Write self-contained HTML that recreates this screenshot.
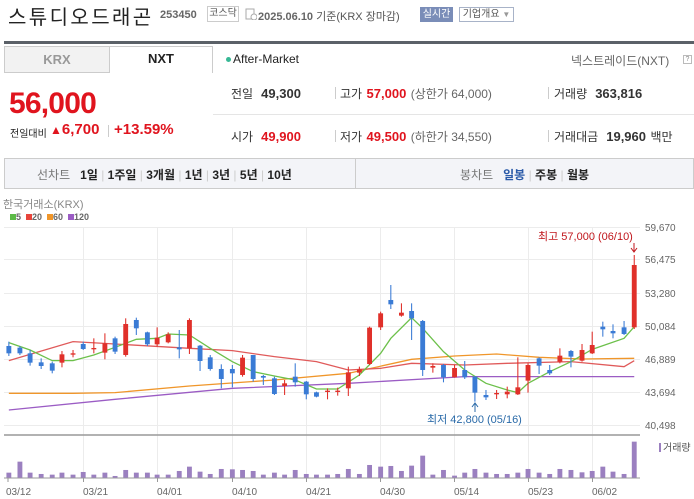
<!DOCTYPE html>
<html><head><meta charset="utf-8">
<style>
*{margin:0;padding:0;box-sizing:border-box}
body{width:694px;height:499px;overflow:hidden;background:#fff;font-family:"Liberation Sans","Noto Sans CJK KR",sans-serif;color:#333;position:relative}
.a{position:absolute;white-space:nowrap}
.red{color:#e0141e}
.lbl{font-size:12px;color:#333}
.val{font-size:13px;font-weight:bold}
.sm{font-size:12px;color:#666}
.div{position:absolute;width:1px;height:12px;background:#ccc}
.pb{font-size:12px;color:#222;font-weight:bold}
</style></head><body>
<div class="a" style="left:8px;top:1px;font-size:20px;color:#222;letter-spacing:2.4px">스튜디오드래곤</div>
<div class="a" style="left:160px;top:9px;font-size:11px;font-weight:bold;color:#666">253450</div>
<div class="a" style="left:207px;top:6px;width:32px;height:16px;border:1px solid #ccc;font-size:10px;line-height:14px;text-align:center;color:#555">코스닥</div>
<svg class="a" style="left:245px;top:8px" width="12" height="12"><rect x="1" y="1" width="8" height="10" fill="none" stroke="#aaa"/><circle cx="9" cy="9" r="3" fill="#fff" stroke="#aaa"/></svg>
<div class="a" style="left:258px;top:8px;font-size:11px;color:#555"><b style="color:#666">2025.06.10</b> 기준(KRX 장마감)</div>
<div class="a" style="left:420px;top:7px;width:33px;height:15px;background:#7a8db8;color:#fff;font-size:10px;line-height:15px;text-align:center">실시간</div>
<div class="a" style="left:459px;top:7px;width:55px;height:15px;border:1px solid #a8b3c8;color:#555;font-size:10px;line-height:13px;text-align:center">기업개요 <span style="color:#999;font-size:8px">▼</span></div>
<div class="a" style="left:4px;top:41px;width:690px;height:3px;background:#5b6168"></div>
<div class="a" style="left:4px;top:46px;width:105px;height:27px;background:#f2f2f2;border:1px solid #ccc;border-right:none;font-size:13px;font-weight:bold;color:#999;text-align:center;line-height:25px">KRX</div>
<div class="a" style="left:109px;top:46px;width:104px;height:27px;border:1px solid #ccc;border-bottom:none;font-size:13px;font-weight:bold;color:#222;text-align:center;line-height:23px">NXT</div>
<div class="a" style="left:226px;top:57px;width:5px;height:5px;border-radius:50%;background:#37b895"></div>
<div class="a" style="left:233px;top:52px;font-size:12px;color:#222">After-Market</div>
<div class="a" style="left:571px;top:52px;font-size:12px;color:#666">넥스트레이드(NXT)</div>
<div class="a" style="left:683px;top:55px;width:9px;height:9px;border:1px solid #bbb;font-size:7px;line-height:7px;text-align:center;color:#888">?</div>
<div class="a red" style="left:9px;top:87px;font-size:30px;font-weight:bold;letter-spacing:-0.8px">56,000</div>
<div class="a" style="left:10px;top:125px;font-size:10px;color:#222">전일대비</div>
<div class="a red" style="left:50px;top:121px;font-size:15px;font-weight:bold"><span style="font-size:12px">▲</span>6,700</div>
<div class="div" style="left:108px;top:125px"></div>
<div class="a red" style="left:114px;top:121px;font-size:15px;font-weight:bold">+13.59%</div>
<div class="a" style="left:213px;top:114px;width:481px;height:1px;background:#e5e5e5"></div>
<div class="a" style="left:231px;top:85px"><span class="lbl">전일</span> <span class="val">&nbsp;49,300</span></div>
<div class="div" style="left:335px;top:87px"></div>
<div class="a" style="left:340px;top:85px"><span class="lbl">고가</span> <span class="val red">57,000</span> <span class="sm">(상한가 64,000)</span></div>
<div class="div" style="left:548px;top:87px"></div>
<div class="a" style="left:554px;top:85px"><span class="lbl">거래량</span> <span class="val">&nbsp;363,816</span></div>
<div class="a" style="left:231px;top:128px"><span class="lbl">시가</span> <span class="val red">&nbsp;49,900</span></div>
<div class="div" style="left:335px;top:130px"></div>
<div class="a" style="left:340px;top:128px"><span class="lbl">저가</span> <span class="val red">49,500</span> <span class="sm">(하한가 34,550)</span></div>
<div class="div" style="left:548px;top:130px"></div>
<div class="a" style="left:554px;top:128px"><span class="lbl">거래대금</span> <span class="val">&nbsp;19,960</span> <span class="lbl">백만</span></div>
<div class="a" style="left:4px;top:158px;width:690px;height:31px;background:#f3f4f8;border:1px solid #ccc"></div>
<div class="a" style="left:355px;top:159px;width:1px;height:29px;background:#ccc"></div>
<div class="a" style="left:37px;top:166px;font-size:12px"><span style="color:#777">선차트</span>&nbsp;&nbsp;&nbsp;<span class="pb">1일</span> <span style="color:#ccc">|</span> <span class="pb">1주일</span> <span style="color:#ccc">|</span> <span class="pb">3개월</span> <span style="color:#ccc">|</span> <span class="pb">1년</span> <span style="color:#ccc">|</span> <span class="pb">3년</span> <span style="color:#ccc">|</span> <span class="pb">5년</span> <span style="color:#ccc">|</span> <span class="pb">10년</span></div>
<div class="a" style="left:460px;top:166px;font-size:12px"><span style="color:#777">봉차트</span>&nbsp;&nbsp;&nbsp;<span class="pb" style="color:#2a5aa8">일봉</span> <span style="color:#ccc">|</span> <span class="pb">주봉</span> <span style="color:#ccc">|</span> <span class="pb">월봉</span></div>
<div class="a" style="left:3px;top:199px;font-size:11px;line-height:12px;color:#888">한국거래소(KRX)</div>
<div class="a" style="left:10px;top:212px;font-size:9px;line-height:10px;font-weight:bold;color:#666"><span style="display:inline-block;width:6px;height:6px;background:#5cba47"></span>5 &nbsp;<span style="display:inline-block;width:6px;height:6px;background:#e8453c"></span>20 &nbsp;<span style="display:inline-block;width:6px;height:6px;background:#f0962a"></span>60 &nbsp;<span style="display:inline-block;width:6px;height:6px;background:#9b5cc4"></span>120</div>

<svg class="a" style="left:0;top:0" width="694" height="499">
<g stroke="#ececec" stroke-width="1">
<line x1="4" y1="227.5" x2="640" y2="227.5"/><line x1="4" y1="259.5" x2="640" y2="259.5"/><line x1="4" y1="293.5" x2="640" y2="293.5"/><line x1="4" y1="326.5" x2="640" y2="326.5"/><line x1="4" y1="359.5" x2="640" y2="359.5"/><line x1="4" y1="392.5" x2="640" y2="392.5"/><line x1="4" y1="425.5" x2="640" y2="425.5"/>
<line x1="83.5" y1="227" x2="83.5" y2="478"/><line x1="157.5" y1="227" x2="157.5" y2="478"/><line x1="232.5" y1="227" x2="232.5" y2="478"/><line x1="306.5" y1="227" x2="306.5" y2="478"/><line x1="380.5" y1="227" x2="380.5" y2="478"/><line x1="454.5" y1="227" x2="454.5" y2="478"/><line x1="528.5" y1="227" x2="528.5" y2="478"/><line x1="592.5" y1="227" x2="592.5" y2="478"/>
</g>
<line x1="4" y1="435" x2="640" y2="435" stroke="#999" stroke-width="1.5"/>
<line x1="4" y1="478" x2="640" y2="478" stroke="#999"/>
<g font-size="10" fill="#666" font-family="Liberation Sans,sans-serif">
<text x="645" y="231">59,670</text><text x="645" y="263">56,475</text><text x="645" y="297">53,280</text><text x="645" y="330">50,084</text><text x="645" y="363">46,889</text><text x="645" y="396">43,694</text><text x="645" y="429">40,498</text>
<text x="6" y="495">03/12</text><text x="83" y="495">03/21</text><text x="157" y="495">04/01</text><text x="232" y="495">04/10</text><text x="306" y="495">04/21</text><text x="380" y="495">04/30</text><text x="454" y="495">05/14</text><text x="528" y="495">05/23</text><text x="592" y="495">06/02</text>
</g>
<g stroke="#999"><line x1="8" y1="478" x2="8" y2="482"/><line x1="83.5" y1="478" x2="83.5" y2="482"/><line x1="157.5" y1="478" x2="157.5" y2="482"/><line x1="232.5" y1="478" x2="232.5" y2="482"/><line x1="306.5" y1="478" x2="306.5" y2="482"/><line x1="380.5" y1="478" x2="380.5" y2="482"/><line x1="454.5" y1="478" x2="454.5" y2="482"/><line x1="528.5" y1="478" x2="528.5" y2="482"/><line x1="592.5" y1="478" x2="592.5" y2="482"/></g>
<text x="538" y="240" font-size="11" fill="#c0161c" font-family="Liberation Sans,Noto Sans CJK KR,sans-serif">최고 57,000 (06/10)</text>
<path d="M634 243v8M631 248l3 4 3-4" stroke="#c0161c" fill="none"/>
<text x="427" y="423" font-size="11" fill="#2a6aa8" font-family="Liberation Sans,Noto Sans CJK KR,sans-serif">최저 42,800 (05/16)</text>
<path d="M475 412v-8M472 407l3-4 3 4" stroke="#2a6aa8" fill="none"/>
<rect x="659" y="443" width="2" height="9" fill="#9b80c0"/>
<text x="663" y="451" font-size="10" fill="#555" font-family="Liberation Sans,Noto Sans CJK KR,sans-serif">거래량</text>
<g transform="translate(0,270) scale(0.4426,0.3333)">
<g fill="none" stroke-width="1.3">
<polyline vector-effect="non-scaling-stroke" stroke="#9b5cc4" points="20,420 260,388 525,355 787,340 1050,320 1433,320"/>
<polyline vector-effect="non-scaling-stroke" stroke="#f0962a" points="20,370 165,370 260,368 428,348 620,330 787,310 930,268 1027,258 1122,252 1218,262 1315,267 1433,265"/>
<polyline vector-effect="non-scaling-stroke" stroke="#e05a5a" points="20,272 165,215 260,222 428,235 525,242 620,260 715,275 787,300 860,295 930,280 1050,285 1146,280 1290,275 1410,290 1433,272"/>
<polyline vector-effect="non-scaling-stroke" stroke="#6cc04a" points="20,218 68,240 118,272 165,272 212,255 260,232 308,208 355,205 380,192 428,195 475,235 525,275 572,305 620,318 667,330 715,357 763,357 812,315 860,250 883,205 930,143 955,175 1002,245 1050,300 1098,340 1146,360 1170,368 1193,340 1242,305 1290,275 1338,238 1410,205 1433,170"/>
</g>
<g id="c"></g>
</g>
</svg>
<script>
var C=[[20,'b',228,250,215,258],[45,'b',233,250,228,255],[68,'b',250,278,240,287],[93,'b',277,288,265,297],[118,'b',280,302,275,310],[140,'r',253,278,243,292],[165,'r',250,254,240,262],[188,'b',222,237,215,240],[212,'r',234,237,205,250],[237,'r',220,248,190,268],[260,'b',205,245,200,252],[284,'r',162,255,145,260],[308,'b',150,175,143,195],[333,'b',187,223,185,228],[355,'r',203,223,172,230],[380,'r',193,217,187,220],[405,'b',232,238,180,265],[428,'r',150,235,145,252],[452,'b',227,273,225,303],[475,'b',262,297,255,302],[500,'b',297,327,283,355],[525,'b',297,310,285,352],[548,'r',263,315,255,320],[572,'b',255,327,255,335],[595,'b',318,323,315,345],[620,'b',325,372,320,375],[643,'r',340,348,330,375],[667,'b',320,337,280,350],[692,'b',335,373,333,388],[715,'b',367,380,365,382],[740,'r',362,364,355,388],[763,'r',362,364,353,377],[787,'r',307,355,290,378],[812,'r',298,308,290,318],[835,'r',173,282,170,285],[860,'r',130,172,125,180],[883,'b',90,103,45,117],[907,'r',128,137,100,140],[930,'b',123,145,100,210],[955,'b',153,300,150,318],[978,'r',288,293,280,308],[1002,'b',285,322,282,337],[1027,'r',294,322,285,323],[1050,'b',300,322,273,327],[1073,'b',320,368,318,395],[1098,'b',375,382,360,390],[1122,'r',369,373,360,387],[1146,'r',365,373,350,385],[1170,'r',352,373,262,375],[1193,'r',285,332,280,368],[1218,'b',265,287,262,312],[1242,'b',300,310,285,315],[1265,'r',257,275,235,280],[1290,'b',243,260,240,292],[1315,'r',240,272,222,275],[1338,'r',225,250,185,252],[1362,'b',170,178,155,200],[1385,'b',183,190,163,205],[1410,'b',172,192,153,195],[1433,'r',-15,172,-45,177]];
var V=[608,575,608,612,614,608,614,606,614,608,618,600,608,608,614,614,603,590,605,612,597,598,600,603,614,608,614,600,612,614,614,612,597,612,585,590,588,603,587,557,614,600,617,608,597,608,612,612,608,597,608,612,597,600,607,603,590,605,612,515];
var s='';
C.forEach(function(c,i){var col=c[1]=='r'?'#e0302a':'#3a7bd5';
s+='<rect x="'+(c[0]-1.2)+'" y="'+c[4]+'" width="2.4" height="'+(c[5]-c[4])+'" fill="'+col+'"/>';
s+='<rect x="'+(c[0]-5.5)+'" y="'+c[2]+'" width="11" height="'+Math.max(4,c[3]-c[2])+'" fill="'+col+'"/>';
s+='<rect x="'+(c[0]-5.5)+'" y="'+V[i]+'" width="11" height="'+(623-V[i])+'" fill="#9b80c0"/>';});
document.getElementById('c').innerHTML=s;
</script>
</body></html>
